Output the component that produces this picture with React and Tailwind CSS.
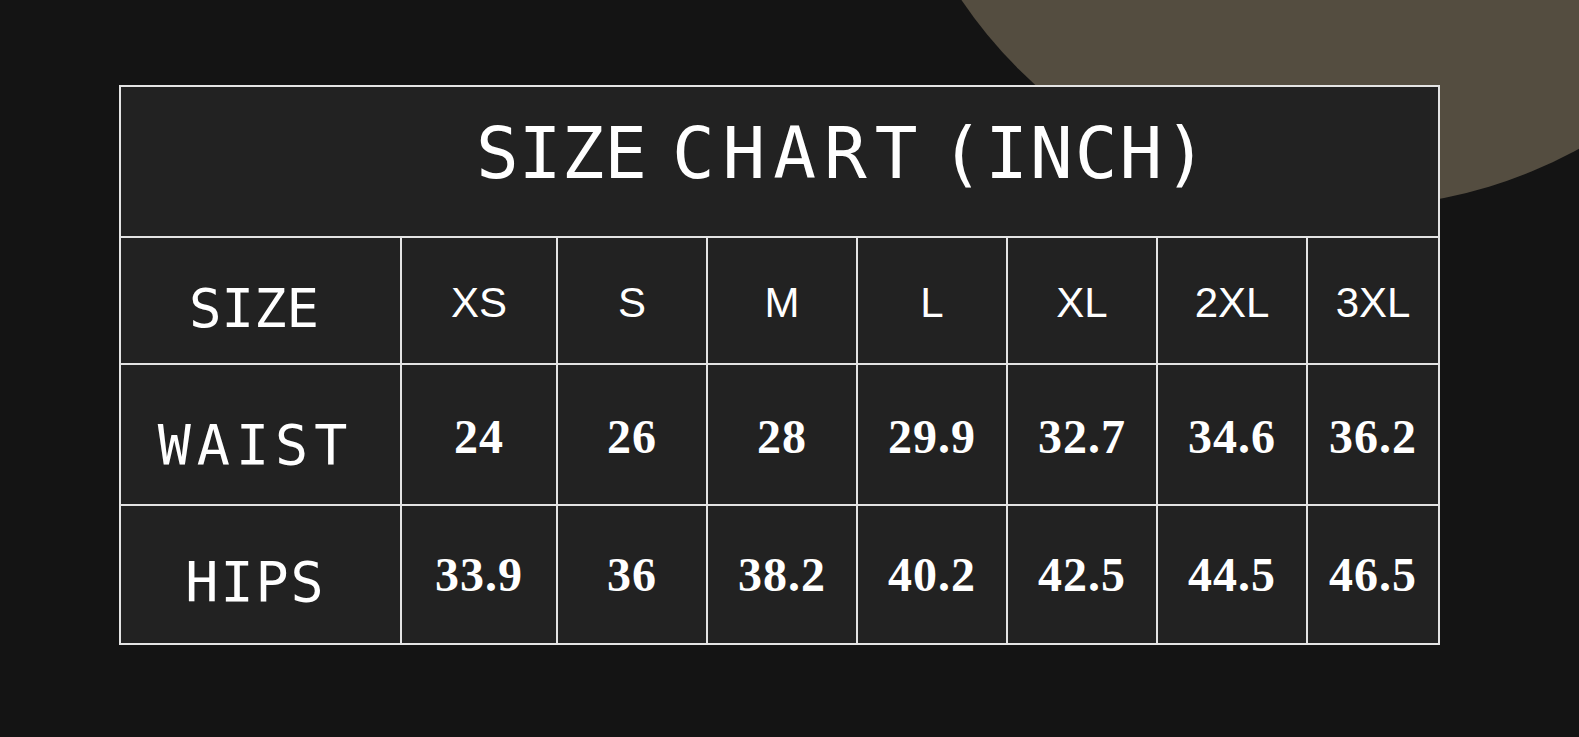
const sizes = ["XS", "S", "M", "L", "XL", "2XL", "3XL"];

const rows = [
  { label: "WAIST", tracking: "tracking-[6px]", pad: "pt-[22px]", numPad: "pt-[5px]", values: ["24", "26", "28", "29.9", "32.7", "34.6", "36.2"] },
  { label: "HIPS", tracking: "tracking-[2px]", pad: "pt-[16px]", numPad: "pt-0", values: ["33.9", "36", "38.2", "40.2", "42.5", "44.5", "46.5"] },
];

const mono = "font-['DejaVu_Sans_Mono',monospace]";
const serif = "font-['Liberation_Serif',serif]";
const sans = "font-['Liberation_Sans',sans-serif]";

const App = () => {
  return (
    <div className="relative w-full h-[737px] bg-[#141414] overflow-hidden">
      {/* background blob */}
      <div className="absolute left-[880px] top-[-737px] w-[944px] h-[944px] rounded-full bg-[#544d40]" />

      <div className="relative pl-[119px] pt-[85px]">
        <div className="w-[1321px] grid grid-cols-[279px_154px_148px_148px_148px_148px_148px_130px] grid-rows-[149px_125px_139px_137px] gap-[2px] p-[2px] bg-[#e4e4e4]">
          <div className={`col-span-8 bg-[#222222] flex items-center justify-center pl-[126px] pb-[17px] text-white text-[71px] leading-none ${mono}`}>
            <span className="mr-[25px]">SIZE</span>
            <span className="tracking-[8px] mr-[15px]">CHART</span>
            <span className="tracking-[2px]">(INCH)</span>
          </div>

          <div className={`bg-[#222222] flex items-center justify-center pr-[13px] pt-[17px] text-white text-[54px] leading-none ${mono}`}>
            SIZE
          </div>
          {sizes.map((s) => (
            <div
              key={s}
              className={`bg-[#222222] flex items-center justify-center pt-[5px] text-white text-[42px] leading-none ${sans}`}
            >
              {s}
            </div>
          ))}

          {rows.map((row) => (
            <>
              <div
                key={row.label}
                className={`bg-[#222222] flex items-center justify-center pr-[10px] ${row.pad} text-white text-[55px] leading-none ${row.tracking} ${mono}`}
              >
                {row.label}
              </div>
              {row.values.map((v, i) => (
                <div
                  key={row.label + i}
                  className={`bg-[#222222] flex items-center justify-center ${row.numPad} text-white text-[48px] font-bold leading-none tracking-[1px] ${serif}`}
                >
                  {v}
                </div>
              ))}
            </>
          ))}
        </div>
      </div>
    </div>
  );
};

export default App;
